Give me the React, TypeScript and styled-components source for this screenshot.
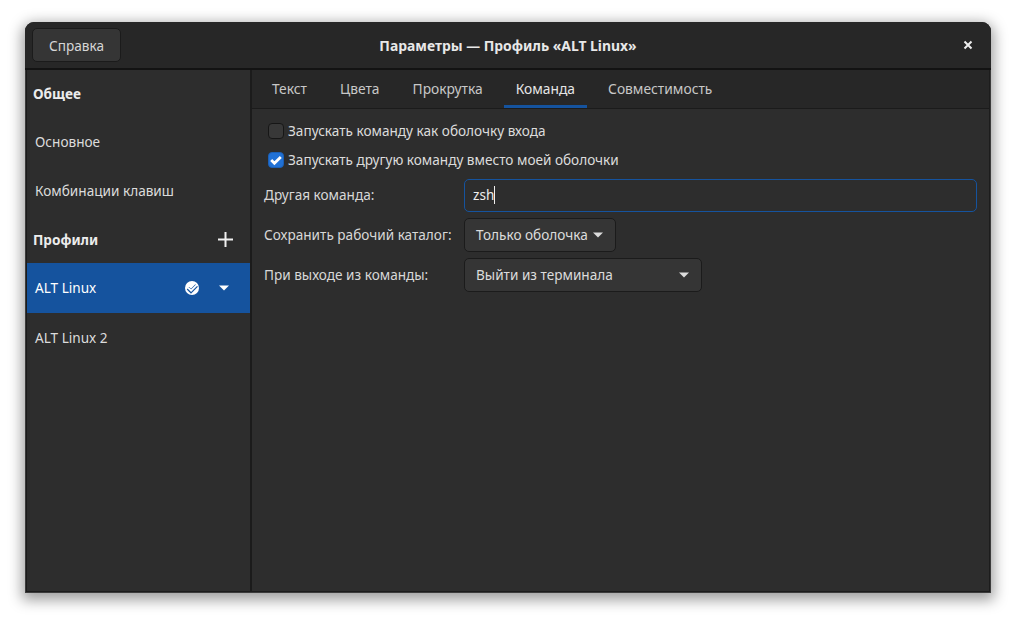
import React from "react";
import styled, { createGlobalStyle } from "styled-components";

const Global = createGlobalStyle`
  html, body {
    margin: 0;
    padding: 0;
    background: #fff;
  }
  body {
    font-family: "Noto Sans", "Open Sans", sans-serif;
    font-size: 13.6px;
    color: #dcdcdc;
  }
`;

const Arrow = () => (
  <svg width="10" height="6" viewBox="0 0 10 6">
    <path d="M0 0.5h10L5 5.5z" fill="currentColor" />
  </svg>
);

const Check = () => (
  <svg width="14" height="14" viewBox="0 0 14 14">
    <path d="M2.2 7l3.2 3.2 6.4-6.2" fill="none" stroke="#fff" strokeWidth="2.8" />
  </svg>
);

const App = () => {
  return (
    <Page>
      <Global />
      <Window>
        <Header>
          <HelpButton>Справка</HelpButton>
          <Title>Параметры — Профиль «ALT Linux»</Title>
          <CloseButton>
            <svg width="10" height="10" viewBox="0 0 10 10">
              <path d="M1.5 1.5l7 7M8.5 1.5l-7 7" stroke="#eee" strokeWidth="2" />
            </svg>
          </CloseButton>
        </Header>
        <Body>
          <Sidebar>
            <SectionHead $first>Общее</SectionHead>
            <SideRow>Основное</SideRow>
            <SideRow>Комбинации клавиш</SideRow>
            <SectionHead>
              Профили
              <svg width="15" height="15" viewBox="0 0 15 15">
                <path d="M7.5 0v15M0 7.5h15" stroke="#f0f0f0" strokeWidth="2" />
              </svg>
            </SectionHead>
            <SideRow $selected>
              <RowName>ALT Linux</RowName>
              <svg width="16" height="16" viewBox="0 0 16 16">
                <circle cx="7" cy="8" r="7" fill="#fff" />
                <path d="M3 8.2l3 3 5.6-5.6" fill="none" stroke="#15539e" strokeWidth="3.6" />
                <path d="M3.2 7.8l2.9 2.9 6-6" fill="none" stroke="#fff" strokeWidth="1.8" />
              </svg>
              <RowArrow>
                <Arrow />
              </RowArrow>
            </SideRow>
            <SideRow>ALT Linux 2</SideRow>
          </Sidebar>
          <Main>
            <Tabs>
              <Tab>Текст</Tab>
              <Tab>Цвета</Tab>
              <Tab>Прокрутка</Tab>
              <Tab $active>Команда</Tab>
              <Tab>Совместимость</Tab>
            </Tabs>
            <Panel>
              <CheckRow>
                <CheckBox />
                Запускать команду как оболочку входа
              </CheckRow>
              <CheckRow>
                <CheckBox $checked>
                  <Check />
                </CheckBox>
                Запускать другую команду вместо моей оболочки
              </CheckRow>
              <FormGrid>
                <Label>Другая команда:</Label>
                <Entry>
                  zsh
                  <Caret />
                </Entry>
                <Label>Сохранить рабочий каталог:</Label>
                <Combo>
                  <ComboText>Только оболочка</ComboText>
                  <Arrow />
                </Combo>
                <Label>При выходе из команды:</Label>
                <Combo $wide>
                  <ComboText>Выйти из терминала</ComboText>
                  <Arrow />
                </Combo>
              </FormGrid>
            </Panel>
          </Main>
        </Body>
      </Window>
    </Page>
  );
};

export default App;

const Page = styled.div`
  width: 1016px;
  height: 621px;
  padding: 22px 25px 28px;
  box-sizing: border-box;
  overflow: hidden;
`;
const Window = styled.div`
  width: 966px;
  height: 571px;
  display: flex;
  flex-direction: column;
  box-sizing: border-box;
  background: #2d2d2d;
  border: 1px solid #3c3c3c;
  border-top: 0;
  border-radius: 9px 9px 0 0;
  box-shadow: 0 4px 14px 3px rgba(0, 0, 0, 0.38);
`;
const Header = styled.div`
  height: 48px;
  flex: none;
  display: flex;
  align-items: center;
  justify-content: space-between;
  position: relative;
  box-sizing: border-box;
  padding: 7px 18px 7px 7px;
  background: #272727;
  border-bottom: 2px solid #131313;
  border-radius: 9px 9px 0 0;
  margin: 0 -1px;
`;
const HelpButton = styled.div`
  width: 89px;
  height: 34px;
  display: flex;
  align-items: center;
  justify-content: center;
  box-sizing: border-box;
  background: #353535;
  border: 1px solid #1b1b1b;
  border-radius: 5px;
  color: #d6d6d6;
`;
const Title = styled.div`
  position: absolute;
  left: 0;
  right: 0;
  text-align: center;
  font-size: 13.9px;
  font-weight: 700;
  color: #e8e8e8;
  pointer-events: none;
`;
const CloseButton = styled.div`
  width: 10px;
  height: 10px;
  display: flex;
`;
const Body = styled.div`
  flex: 1;
  display: flex;
  min-height: 0;
  border: 1px solid #1c1c1c;
  border-top: 0;
`;
const Sidebar = styled.div`
  width: 225px;
  flex: none;
  box-sizing: border-box;
  border-right: 2px solid #1b1b1b;
  display: flex;
  flex-direction: column;
`;
const SectionHead = styled.div<{ $first?: boolean }>`
  height: ${(p) => (p.$first ? "47px" : "48px")};
  flex: none;
  display: flex;
  align-items: center;
  justify-content: space-between;
  box-sizing: border-box;
  padding: 0 17px 0 6px;
  font-weight: 700;
  color: #ececec;
`;
const SideRow = styled.div<{ $selected?: boolean }>`
  height: ${(p) => (p.$selected ? "50px" : "49px")};
  flex: none;
  display: flex;
  align-items: center;
  box-sizing: border-box;
  padding: 0 21px 0 8px;
  background: ${(p) => (p.$selected ? "#15539e" : "transparent")};
  color: ${(p) => (p.$selected ? "#fff" : "#dcdcdc")};
`;
const RowName = styled.span`
  flex: 1;
  margin-bottom: 2px;
`;
const RowArrow = styled.span`
  display: flex;
  margin-left: 18px;
  color: #fff;
`;
const Main = styled.div`
  flex: 1;
  display: flex;
  flex-direction: column;
  min-width: 0;
`;
const Tabs = styled.div`
  height: 39px;
  flex: none;
  display: flex;
  gap: 9px;
  box-sizing: border-box;
  padding-left: 8px;
  background: #272727;
  border-bottom: 1px solid #1b1b1b;
`;
const Tab = styled.div<{ $active?: boolean }>`
  display: flex;
  align-items: center;
  padding: 1px 12px 0;
  height: 38px;
  box-sizing: border-box;
  font-size: 13.8px;
  color: ${(p) => (p.$active ? "#e6e6e6" : "#c8c8c8")};
  border-bottom: 3px solid ${(p) => (p.$active ? "#15539e" : "transparent")};
`;
const Panel = styled.div`
  display: flex;
  flex-direction: column;
  padding: 7px 12px 0 12px;
`;
const CheckRow = styled.div`
  height: 29px;
  display: flex;
  align-items: center;
  gap: 4px;
  padding-left: 4px;
  color: #dcdcdc;
`;
const CheckBox = styled.span<{ $checked?: boolean }>`
  width: 16px;
  height: 16px;
  display: flex;
  align-items: center;
  justify-content: center;
  box-sizing: border-box;
  border-radius: 4px;
  background: ${(p) => (p.$checked ? "#2171d5" : "#383838")};
  border: 1px solid ${(p) => (p.$checked ? "#1b5fb5" : "#161616")};
`;
const FormGrid = styled.div`
  display: grid;
  grid-template-columns: 200px 1fr;
  row-gap: 6px;
  align-items: center;
  margin-top: 5px;
`;
const Label = styled.div`
  color: #d8d8d8;
  padding-bottom: 2px;
`;
const Entry = styled.div`
  height: 33px;
  display: flex;
  align-items: center;
  box-sizing: border-box;
  padding: 0 0 2px 8px;
  background: #2d2d2d;
  border: 1px solid #15539e;
  border-radius: 5px;
  color: #eee;
`;
const Caret = styled.span`
  width: 1px;
  height: 18px;
  background: #eee;
`;
const Combo = styled.div<{ $wide?: boolean }>`
  width: ${(p) => (p.$wide ? "238px" : "152px")};
  height: 34px;
  display: flex;
  align-items: center;
  justify-content: space-between;
  box-sizing: border-box;
  padding: 0 12px 0 11px;
  background: #353535;
  border: 1px solid #1b1b1b;
  border-radius: 5px;
  color: #dcdcdc;
`;
const ComboText = styled.span`
  margin-bottom: 2px;
`;
